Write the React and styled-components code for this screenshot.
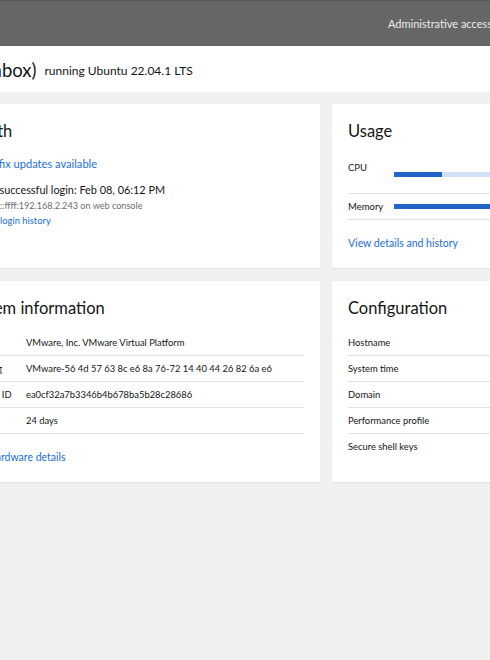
import React from "react";
import styled, { createGlobalStyle } from "styled-components";
import { Bug, User } from "lucide-react";

const GlobalStyle = createGlobalStyle`
  html, body { margin: 0; padding: 0; background: #f0f0f0; overflow: hidden; }
  body { font-family: "Lato", "Liberation Sans", sans-serif; color: #151515; }
  * { box-sizing: border-box; }
`;

const SHIFT = 200;

const Page = styled.div`
  width: 900px;
  margin-left: -${SHIFT}px;
  min-height: 660px;
  background: #f0f0f0;
`;

const Masthead = styled.header`
  height: 46px;
  background: #666666;
  border-top: 1px solid #5a5a5a;
  display: flex;
  align-items: center;
  padding-left: ${SHIFT + 388}px;
  color: #ececec;
  font-size: 11px;
`;

const HostBar = styled.div`
  height: 46px;
  background: #fff;
  display: flex;
  align-items: center;
  gap: 8px;
  padding: 2px 0 0 ${SHIFT - 107}px;
`;

const HostName = styled.h1`
  margin: 0;
  font-size: 18.5px;
  font-weight: 400;
  white-space: nowrap;
`;

const HostOs = styled.span`
  font-size: 12px;
  white-space: nowrap;
`;

const Grid = styled.main`
  display: grid;
  grid-template-columns: 372px 400px;
  column-gap: 12px;
  row-gap: 13px;
  padding: 12px 0 0 ${SHIFT - 52}px;
`;

const Card = styled.section`
  background: #fff;
  padding: 16px 16px 14px;
  box-shadow: 0 1px 1px rgba(3, 3, 3, 0.05);
  display: flex;
  flex-direction: column;
`;

const CardTitle = styled.h2`
  margin: 0 0 ${(p) => p.$gap || 8}px;
  font-size: 16.5px;
  font-weight: 400;
  line-height: 23px;
  white-space: nowrap;
`;

const List = styled.ul`
  list-style: none;
  margin: 0;
  padding: 0;
  display: flex;
  flex-direction: column;
  gap: 7px;
`;

const Item = styled.li`
  display: flex;
  gap: 3px;
  align-items: flex-start;
`;

const IconBox = styled.span`
  width: 10px;
  height: ${(p) => p.$h || 21}px;
  flex: none;
  display: flex;
  align-items: center;
  color: ${(p) => p.$color || "#0066cc"};
`;

const Stack = styled.div`
  display: flex;
  flex-direction: column;
`;

const Link = styled.a`
  color: #1c6ed6;
  text-decoration: none;
  font-size: ${(p) => p.$size || 10.5}px;
  line-height: ${(p) => p.$lh || 21}px;
  white-space: nowrap;
  cursor: pointer;
`;

const BodyText = styled.span`
  font-size: 10.9px;
  line-height: 17px;
  white-space: nowrap;
`;

const Muted = styled.span`
  font-size: 9.1px;
  line-height: 15px;
  color: #6a6e73;
  white-space: nowrap;
`;

const UsageRow = styled.div`
  display: flex;
  align-items: ${(p) => (p.$top ? "flex-start" : "center")};
  height: ${(p) => p.$h}px;
  border-bottom: 1px solid #e2e2e2;
`;

const UsageLabel = styled.span`
  width: 46px;
  flex: none;
  font-size: 9.5px;
  line-height: 18px;
  padding-top: ${(p) => p.$pt || 0}px;
`;

const Bar = styled.div`
  width: 280px;
  height: 5px;
  background: #d2e1f5;
  margin-top: ${(p) => p.$mt || 0}px;
`;

const Fill = styled.div`
  height: 100%;
  background: #2264c9;
`;

const Table = styled.div`
  display: grid;
  grid-template-columns: ${(p) => p.$label}px 1fr;
`;

const Cell = styled.div`
  font-size: 9.4px;
  line-height: 17px;
  padding: 4px 0;
  border-bottom: ${(p) => (p.$last ? "none" : "1px solid #e2e2e2")};
  white-space: nowrap;
`;

const FooterLink = styled(Link)`
  margin-top: 13px;
`;

const sysinfo = [
  ["Model", "VMware, Inc. VMware Virtual Platform"],
  ["Asset tag", "VMware-56 4d 57 63 8c e6 8a 76-72 14 40 44 26 82 6a e6"],
  ["Machine ID", "ea0cf32a7b3346b4b678ba5b28c28686"],
  ["Up time", "24 days"],
];

const config = [
  ["Hostname", ""],
  ["System time", ""],
  ["Domain", ""],
  ["Performance profile", ""],
  ["Secure shell keys", ""],
];

const usage = [
  { name: "CPU", pct: 17.1, h: 43, top: true },
  { name: "Memory", pct: 100, h: 26 },
];

export default function App() {
  return (
    <>
      <GlobalStyle />
      <Page>
        <Masthead>Administrative access</Masthead>
        <HostBar>
          <HostName>cockpit (openbox)</HostName>
          <HostOs>running Ubuntu 22.04.1 LTS</HostOs>
        </HostBar>
        <Grid>
          <Card>
            <CardTitle $gap={10}>Health</CardTitle>
            <List>
              <Item>
                <IconBox><Bug size={10} /></IconBox>
                <Link $size={11.1}>Bug fix updates available</Link>
              </Item>
              <Item>
                <IconBox $h={17} $color="#6a6e73"><User size={10} /></IconBox>
                <Stack>
                  <BodyText>Last successful login: Feb 08, 06:12 PM</BodyText>
                  <Muted>From ::ffff:192.168.2.243 on web console</Muted>
                  <Link $size={9.4} $lh={15}>View login history</Link>
                </Stack>
              </Item>
            </List>
          </Card>
          <Card>
            <CardTitle $gap={8}>Usage</CardTitle>
            {usage.map((u) => (
              <UsageRow key={u.name} $h={u.h} $top={u.top}>
                <UsageLabel $pt={u.top ? 8 : 0}>{u.name}</UsageLabel>
                <Bar $mt={u.top ? 21 : 0}>
                  <Fill style={{ width: `${u.pct}%` }} />
                </Bar>
              </UsageRow>
            ))}
            <FooterLink>View details and history</FooterLink>
          </Card>
          <Card>
            <CardTitle $gap={10}>System information</CardTitle>
            <Table $label={62}>
              {sysinfo.map(([k, v]) => (
                <React.Fragment key={k}>
                  <Cell>{k}</Cell>
                  <Cell>{v}</Cell>
                </React.Fragment>
              ))}
            </Table>
            <FooterLink>View hardware details</FooterLink>
          </Card>
          <Card>
            <CardTitle $gap={10}>Configuration</CardTitle>
            <Table $label={160}>
              {config.map(([k, v], i) => (
                <React.Fragment key={k}>
                  <Cell $last={i === config.length - 1}>{k}</Cell>
                  <Cell $last={i === config.length - 1}>{v}</Cell>
                </React.Fragment>
              ))}
            </Table>
          </Card>
        </Grid>
      </Page>
    </>
  );
}
